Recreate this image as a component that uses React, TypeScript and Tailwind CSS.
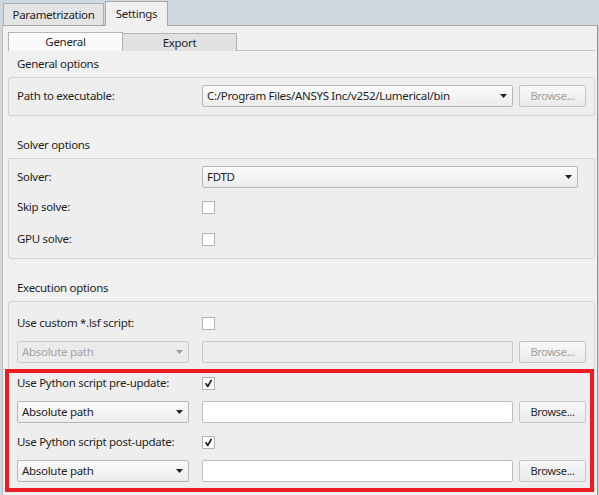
import React from 'react';

const font = "font-['Noto_Sans',sans-serif] text-[11px] tracking-[-0.3px] leading-[16px]";

function Arrow({ disabled }: { disabled?: boolean }) {
  return (
    <svg width="7" height="4" viewBox="0 0 7 4" className="shrink-0">
      <path d="M0 0 H7 L3.5 4 Z" fill={disabled ? '#9a9a9a' : '#222'} />
    </svg>
  );
}

function Combo({ value, width, disabled }: { value: string; width: string; disabled?: boolean }) {
  return (
    <div
      className={`${width} h-[22px] flex items-center justify-between pl-[4px] pr-[5px] rounded-[2px] border ${
        disabled
          ? 'border-[#cdcdcd] bg-[#ebebeb] text-[#a3a3a3]'
          : 'border-[#b6b6b6] bg-linear-to-b from-[#fbfbfb] to-[#ececec] text-[#1e1e1e]'
      }`}
    >
      <span className="whitespace-nowrap text-[11.5px]">{value}</span>
      <Arrow disabled={disabled} />
    </div>
  );
}

function TextInput({ disabled }: { disabled?: boolean }) {
  return (
    <div
      className={`w-[311px] h-[22px] rounded-[2px] border ${
        disabled ? 'border-[#cbcbcb] bg-[#ececec]' : 'border-[#bdbdbd] bg-white'
      }`}
    />
  );
}

function BrowseButton({ disabled }: { disabled?: boolean }) {
  return (
    <div
      className={`ml-[6px] w-[67px] h-[22px] flex items-center justify-center rounded-[2px] border border-[#c6c6c6] bg-linear-to-b from-[#f7f7f7] to-[#ebebeb] ${
        disabled ? 'text-[#a0a0a0]' : 'text-[#2a2a2a]'
      }`}
    >
      Browse...
    </div>
  );
}

function Checkbox({ checked }: { checked?: boolean }) {
  return (
    <div className="w-[13px] h-[13px] border border-[#b3b3b3] bg-white flex items-center justify-center">
      {checked && (
        <svg width="11" height="11" viewBox="0 0 11 11">
          <path d="M3 5.8 L4.8 8.4 L8.2 2.4" fill="none" stroke="#1a1a1a" strokeWidth="1.7" strokeLinecap="round" strokeLinejoin="round" />
        </svg>
      )}
    </div>
  );
}

function CheckRow({ label, checked, className = '' }: { label: string; checked?: boolean; className?: string }) {
  return (
    <div className={`flex items-center h-[26px] ${className}`}>
      <span className="w-[185px] text-[#1e1e1e] text-[11.5px]">{label}</span>
      <Checkbox checked={checked} />
    </div>
  );
}

function PathRow({ disabled, className = '' }: { disabled?: boolean; className?: string }) {
  return (
    <div className={`flex items-center ${className}`}>
      <Combo value="Absolute path" width="w-[172px]" disabled={disabled} />
      <div className="ml-[13px]">
        <TextInput disabled={disabled} />
      </div>
      <BrowseButton disabled={disabled} />
    </div>
  );
}

function Heading({ title, className = '' }: { title: string; className?: string }) {
  return <div className={`h-[26px] flex items-center pl-[9px] text-[#1e1e1e] text-[11.5px] ${className}`}>{title}</div>;
}

export default function App() {
  return (
    <div className={`relative w-[599px] h-[495px] overflow-hidden bg-[#cfd8de] ${font}`}>
      {/* Top tabs */}
      <div className="flex items-end h-[25px] pl-[3px] text-[11.5px]">
        <div className="w-[101px] h-[22px] flex items-center justify-center bg-[#e4e4e4] border border-b-0 border-[#adadad] text-[#1e1e1e]">
          Parametrization
        </div>
        <div className="ml-[1px] w-[63px] h-[25px] flex items-center justify-center bg-[#f0f0f0] border border-b-0 border-[#a8a8a8] text-[#1e1e1e] relative z-10 -mb-px">
          Settings
        </div>
      </div>

      {/* Panel */}
      <div className="ml-[2px] w-[596px] h-[470px] bg-[#f0f0f0] border-l border-r border-t border-l-[#bcbcbc] border-r-[#8f8f8f] border-t-[#a5a5a5] pl-[5px] pr-[2px]">
        {/* Sub tabs */}
        <div className="mt-[6px] flex h-[19px] border-b border-[#c3c3c3] text-[11.5px]">
          <div className="w-[115px] h-[19px] flex items-center justify-center bg-[#fafafa] border border-b-0 border-[#b4b4b4] text-[#1e1e1e]">
            General
          </div>
          <div className="w-[114px] h-[18px] mt-[1px] flex items-center justify-center bg-[#e2e2e2] border border-l-0 border-b-0 border-[#b4b4b4] text-[#1e1e1e]">
            Export
          </div>
        </div>

        <Heading title="General options" />
        <div className="border border-[#d3d3d3] rounded-[2px] bg-[#eeeeee] pl-[8px] pt-[7px] pb-[8px]">
          <div className="flex items-center h-[22px]">
            <span className="w-[185px] text-[#1e1e1e] text-[11.5px]">Path to executable:</span>
            <Combo value="C:/Program Files/ANSYS Inc/v252/Lumerical/bin" width="w-[311px]" />
            <BrowseButton disabled />
          </div>
        </div>

        <Heading title="Solver options" className="mt-[16px]" />
        <div className="border border-[#d3d3d3] rounded-[2px] bg-[#eeeeee] pl-[8px] pt-[7px] pb-[6px]">
          <div className="flex items-center h-[22px]">
            <span className="w-[185px] text-[#1e1e1e] text-[11.5px]">Solver:</span>
            <Combo value="FDTD" width="w-[376px]" />
          </div>
          <CheckRow label="Skip solve:" className="mt-[6px]" />
          <CheckRow label="GPU solve:" className="mt-[6px]" />
        </div>

        <Heading title="Execution options" className="mt-[16px]" />
        <div className="border border-[#d3d3d3] rounded-[2px] bg-[#eeeeee] pl-[8px] pt-[8px] pb-[8px]">
          <CheckRow label="Use custom *.lsf script:" />
          <PathRow disabled className="mt-[5px]" />
          <CheckRow label="Use Python script pre-update:" checked className="mt-[7px]" />
          <PathRow className="mt-[5px]" />
          <CheckRow label="Use Python script post-update:" checked className="mt-[6px]" />
          <PathRow className="mt-[5px]" />
        </div>
      </div>

      {/* Annotation highlight */}
      <div className="absolute left-[5px] top-[369px] w-[589px] h-[123px] border-[4px] border-[#ed1c24] pointer-events-none" />
    </div>
  );
}
